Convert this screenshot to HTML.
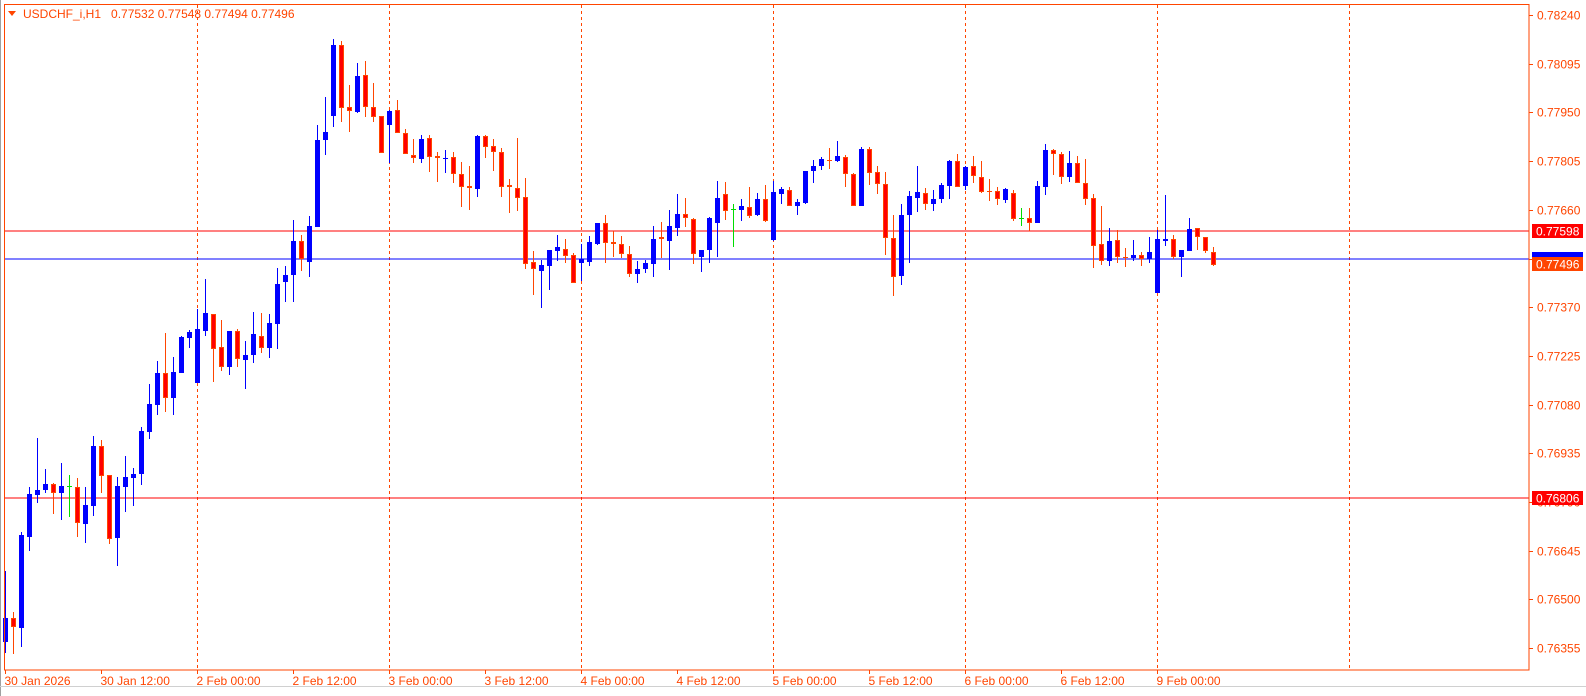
<!DOCTYPE html>
<html><head><meta charset="utf-8"><style>
html,body{margin:0;padding:0;background:#fff;width:1586px;height:696px;overflow:hidden}
svg{display:block}
text{font-family:"Liberation Sans",sans-serif;font-size:12px}
</style></head><body>
<svg id="s" width="1586" height="696" xmlns="http://www.w3.org/2000/svg">
<rect x="0" y="0" width="1586" height="696" fill="#fff"/>
<line x1="0.5" y1="0" x2="0.5" y2="696" stroke="#a0a0a0"/>
<line x1="0" y1="686.5" x2="1586" y2="686.5" stroke="#d0d0d0"/>
<g id="grid"></g>
<line x1="4" y1="231" x2="1529" y2="231" stroke="#ff0000"/>
<line x1="4" y1="259" x2="1529" y2="259" stroke="#0000ff"/>
<line x1="4" y1="498" x2="1529" y2="498" stroke="#ff0000"/>
<g id="c"></g>
<rect x="4.5" y="4.5" width="1524.5" height="665.5" fill="none" stroke="#ff4500"/>
<polygon points="8,11 16,11 12,16" fill="#ff4500"/>
<text x="23" y="18" fill="#ff4500">USDCHF_i,H1&#160;&#160;&#160;0.77532 0.77548 0.77494 0.77496</text>
<g id="ax"></g>
<rect x="1532" y="224" width="51" height="14" fill="#ff0000"/>
<text x="1536" y="235.5" fill="#fff">0.77598</text>
<rect x="1532" y="252" width="51" height="6" fill="#0000ff"/>
<rect x="1532" y="257" width="51" height="14" fill="#ff4500"/>
<text x="1536" y="268.5" fill="#fff">0.77496</text>
<rect x="1532" y="491" width="51" height="14" fill="#ff0000"/>
<text x="1536" y="502.5" fill="#fff">0.76806</text>
</svg>
<script>
var C=[
['b',618,642,571,653],['r',618,627,612,654],['b',535,628,532,647],['b',494,537,487,551],['b',490,495,438,503],['b',484,490,469,493],['r',484,493,483,514],['b',486,493,463,520],['d',486,486,475,517],['r',487,523,478,537],
['b',505,524,487,543],['b',446,506,436,516],['r',446,476,440,493],['r',475,539,475,544],['b',486,538,477,566],['b',477,487,456,512],['b',474,478,468,506],['b',431,474,427,485],['b',404,432,384,439],['b',373,405,361,415],
['r',373,398,333,412],['b',372,398,357,415],['b',337,373,336,373],['b',332,338,330,348],['b',329,383,309,383],['b',313,331,279,336],['r',314,349,314,382],['r',347,367,320,371],['b',331,367,331,375],['r',331,359,329,367],
['b',355,360,341,389],['b',334,355,312,363],['r',336,348,313,353],['b',323,348,314,358],['b',284,324,268,349],['b',275,282,266,302],['b',241,275,220,302],['r',241,259,235,271],['b',226,262,216,277],['b',140,227,125,227],
['b',132,140,97,155],['b',45,116,39,127],['r',45,108,41,122],['r',107,111,85,132],['b',76,112,63,113],['r',75,107,61,117],['r',107,117,83,122],['r',116,153,116,153],['b',111,125,110,163],['r',110,133,100,133],
['r',133,154,129,154],['r',155,158,139,163],['b',139,159,135,163],['r',138,157,135,172],['r',156,158,152,182],['b',158,158,150,173],['r',157,174,152,183],['r',174,187,162,207],['r',186,188,166,210],['b',136,189,135,197],
['r',136,147,135,158],['r',146,152,139,171],['r',152,187,148,197],['r',185,187,179,213],['r',188,198,138,211],['r',197,264,178,269],['r',262,269,251,295],['b',265,271,260,308],['b',250,266,250,290],['b',247,251,235,261],
['r',249,256,239,263],['r',255,283,253,283],['b',259,263,244,281],['b',242,262,236,266],['b',223,244,223,245],['r',223,243,215,263],['r',242,244,231,257],['r',244,254,236,258],['r',254,274,246,277],['b',269,274,261,283],
['b',263,269,260,273],['b',239,264,226,277],['r',237,239,222,258],['b',226,241,210,270],['b',214,228,194,236],['r',214,218,198,227],['r',219,254,218,264],['b',250,257,250,272],['b',218,250,217,263],['b',198,223,181,257],
['r',194,211,182,220],['d',209,209,204,247],['b',206,210,199,221],['r',207,216,187,218],['b',199,215,193,216],['r',199,221,185,222],['b',192,240,181,241],['b',189,194,187,204],['r',190,206,187,206],['b',202,206,199,215],
['b',171,203,171,204],['b',166,171,160,183],['b',159,166,157,170],['r',160,160,148,169],['b',156,161,141,162],['r',157,174,155,187],['r',174,206,173,206],['b',149,206,147,206],['r',149,173,147,185],['r',172,184,166,194],
['r',184,238,172,255],['r',238,277,215,296],['b',215,276,204,285],['b',196,215,191,263],['b',192,198,166,212],['r',193,204,188,210],['b',199,204,190,211],['b',185,199,183,203],['b',161,186,160,199],['r',161,187,154,187],
['b',167,186,166,190],['r',166,176,156,183],['r',177,192,161,193],['r',191,191,179,201],['r',191,199,187,205],['b',189,200,188,203],['r',193,219,190,221],['d',218,218,208,226],['r',218,223,208,231],['b',186,223,181,223],
['b',150,187,144,195],['r',150,154,149,175],['r',154,177,152,184],['b',163,177,151,182],['r',163,183,156,183],['r',183,199,159,205],['r',198,246,194,268],['r',244,261,206,265],['b',241,261,228,266],['r',240,257,230,263],
['r',257,257,248,267],['b',255,258,240,261],['r',255,259,252,266],['b',252,259,237,263],['b',239,293,230,293],['b',239,241,195,246],['r',239,257,235,259],['b',250,257,250,277],['b',229,251,218,251],['r',228,237,228,250],
['r',237,251,237,253],['r',252,265,247,266]
];
var s='';
for(var k=0;k<C.length;k++){
 var c=C[k],x=5.5+8*k,t=c[0];
 var wc=t=='b'?'#0000ff':(t=='d'?'#00dd00':'#ff4500');
 s+='<line x1="'+x+'" y1="'+c[3]+'" x2="'+x+'" y2="'+c[4]+'" stroke="'+wc+'"/>';
 var h=c[2]-c[1];
 if(t=='d'){s+='<line x1="'+(x-2.5)+'" y1="'+(c[1]+.5)+'" x2="'+(x+2.5)+'" y2="'+(c[1]+.5)+'" stroke="#00dd00"/>';}
 else if(h<2){s+='<rect x="'+(x-2.5)+'" y="'+c[1]+'" width="5" height="'+Math.max(h,1)+'" fill="'+wc+'"/>';}
 else if(t=='b'){s+='<rect x="'+(x-2.5)+'" y="'+c[1]+'" width="5" height="'+h+'" fill="#0000ff"/>';}
 else{s+='<rect x="'+(x-2)+'" y="'+(c[1]+.5)+'" width="4" height="'+(h-1)+'" fill="#ff0000" stroke="#ff4500"/>';}
}
document.getElementById('c').innerHTML=s;
var g='';
for(var i=1;i<=7;i++){var x=5.5+192*i;g+='<line x1="'+x+'" y1="5" x2="'+x+'" y2="670" stroke="#ff4500" stroke-dasharray="3,3"/>';}
document.getElementById('grid').innerHTML=g;
var a='';
var P=['0.78240','0.78095','0.77950','0.77805','0.77660','0.77515','0.77370','0.77225','0.77080','0.76935','0.76790','0.76645','0.76500','0.76355'];
for(var i=0;i<P.length;i++){var y=Math.round(15+48.7*i);a+='<line x1="1529" y1="'+(y+.5)+'" x2="1533" y2="'+(y+.5)+'" stroke="#ff4500"/><text x="1537" y="'+(y+4.5)+'" fill="#ff4500">'+P[i]+'</text>';}
var T=['30 Jan 2026','30 Jan 12:00','2 Feb 00:00','2 Feb 12:00','3 Feb 00:00','3 Feb 12:00','4 Feb 00:00','4 Feb 12:00','5 Feb 00:00','5 Feb 12:00','6 Feb 00:00','6 Feb 12:00','9 Feb 00:00'];
for(var i=0;i<T.length;i++){var x=5.5+96*i;a+='<line x1="'+x+'" y1="670" x2="'+x+'" y2="674" stroke="#ff4500"/><text x="'+(x-1)+'" y="685" fill="#ff4500">'+T[i]+'</text>';}
document.getElementById('ax').innerHTML=a;
</script>
</body></html>
